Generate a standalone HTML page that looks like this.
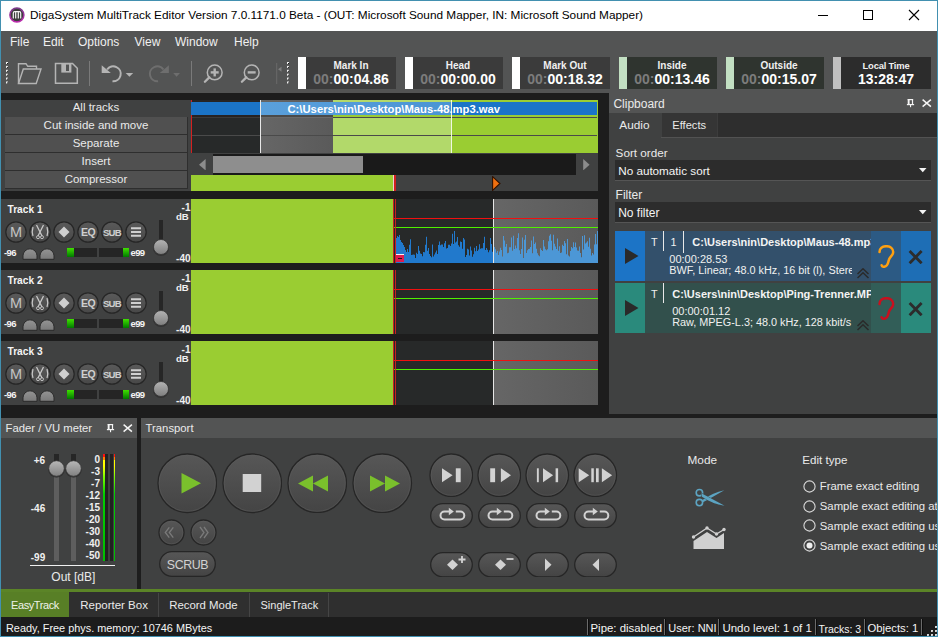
<!DOCTYPE html>
<html><head><meta charset="utf-8"><style>
html,body{margin:0;padding:0;width:938px;height:637px;overflow:hidden;background:#4290b0}
body>div,body>svg{position:absolute}
.t{white-space:nowrap;font-family:"Liberation Sans",sans-serif}
</style></head><body>
<div style="left:0px;top:0px;width:938px;height:637px;background:#4290b0;"></div>
<div style="left:1px;top:1px;width:936px;height:30px;background:#ffffff;"></div>
<div style="left:1px;top:31px;width:936px;height:62px;background:#535454;"></div>
<div style="left:1px;top:93px;width:936px;height:496px;background:#1d1d1d;"></div>
<svg style="left:9px;top:7px;" width="16" height="16" viewBox="0 0 16 16"><defs><linearGradient id="ring" x1="0" y1="0" x2="0" y2="1"><stop offset="0" stop-color="#7a3a8a"/><stop offset="1" stop-color="#c02ab0"/></linearGradient></defs><circle cx="7.9" cy="8.1" r="7.0" fill="#3c3c3c" stroke="url(#ring)" stroke-width="1.5"/><path d="M4.3 11.5 V6 Q4.3 4.6 5.7 4.6 H10.3 Q11.7 4.6 11.7 6 V11.5 M6.7 11.5 V4.8 M9.3 11.5 V4.8" fill="none" stroke="#f4f4f4" stroke-width="1.2"/></svg>
<div class="t" style="left:30px;top:10.01px;font-size:11.8px;line-height:11.8px;color:#000;font-weight:400;">DigaSystem MultiTrack Editor Version 7.0.1171.0 Beta - (OUT: Microsoft Sound Mapper, IN: Microsoft Sound Mapper)</div>
<svg style="left:818px;top:15px;" width="11" height="2" viewBox="0 0 11 2"><rect x="0" y="0" width="10" height="1" fill="#000"/></svg>
<svg style="left:863px;top:10px;" width="11" height="11" viewBox="0 0 11 11"><rect x="0.5" y="0.5" width="9" height="9" fill="none" stroke="#000" stroke-width="1"/></svg>
<svg style="left:908px;top:9px;" width="12" height="12" viewBox="0 0 12 12"><path d="M1 1 L11 11 M11 1 L1 11" stroke="#000" stroke-width="1.1"/></svg>
<div class="t" style="left:10px;top:36.44px;font-size:12px;line-height:12px;color:#f0f0f0;font-weight:400;">File</div>
<div class="t" style="left:43px;top:36.44px;font-size:12px;line-height:12px;color:#f0f0f0;font-weight:400;">Edit</div>
<div class="t" style="left:78px;top:36.44px;font-size:12px;line-height:12px;color:#f0f0f0;font-weight:400;">Options</div>
<div class="t" style="left:134.5px;top:36.44px;font-size:12px;line-height:12px;color:#f0f0f0;font-weight:400;">View</div>
<div class="t" style="left:175px;top:36.44px;font-size:12px;line-height:12px;color:#f0f0f0;font-weight:400;">Window</div>
<div class="t" style="left:234px;top:36.44px;font-size:12px;line-height:12px;color:#f0f0f0;font-weight:400;">Help</div>
<svg style="left:6px;top:62px;" width="3" height="23" viewBox="0 0 3 23"><rect x="0" y="0.0" width="2" height="2" fill="#f0f0f0"/><rect x="1" y="1.0" width="1" height="1" fill="#1a1a1a"/><rect x="0" y="3.9" width="2" height="2" fill="#f0f0f0"/><rect x="1" y="4.9" width="1" height="1" fill="#1a1a1a"/><rect x="0" y="7.8" width="2" height="2" fill="#f0f0f0"/><rect x="1" y="8.8" width="1" height="1" fill="#1a1a1a"/><rect x="0" y="11.7" width="2" height="2" fill="#f0f0f0"/><rect x="1" y="12.7" width="1" height="1" fill="#1a1a1a"/><rect x="0" y="15.6" width="2" height="2" fill="#f0f0f0"/><rect x="1" y="16.6" width="1" height="1" fill="#1a1a1a"/><rect x="0" y="19.5" width="2" height="2" fill="#f0f0f0"/><rect x="1" y="20.5" width="1" height="1" fill="#1a1a1a"/></svg>
<svg style="left:17px;top:62px;" width="26" height="24" viewBox="0 0 26 24"><path d="M1.5 21.5 V1.7 H9 L10.7 4.3 H19.5 V7" fill="none" stroke="#b4b4b4" stroke-width="1.4"/><path d="M1.5 21.5 L6.3 7 H24 L19.2 21.5 Z" fill="none" stroke="#b4b4b4" stroke-width="1.4"/></svg>
<svg style="left:54px;top:62px;" width="25" height="23" viewBox="0 0 25 23"><path d="M1.5 1.5 H18.5 L23.3 6.3 V21.3 H1.5 Z" fill="none" stroke="#b4b4b4" stroke-width="1.5"/><rect x="7.3" y="1.5" width="10.1" height="9.1" fill="#b4b4b4"/><rect x="12" y="2.6" width="3" height="6.4" fill="#535454"/></svg>
<div style="left:89px;top:61px;width:1px;height:25px;background:#7a7a7a;"></div>
<svg style="left:101px;top:63px;" width="34" height="21" viewBox="0 0 34 21"><path d="M6.1 6.5 A7.5 7.5 0 1 1 11.5 18.3" fill="none" stroke="#b4b4b4" stroke-width="2"/><path d="M0.7 2.2 V9.9 H9.8 Z" fill="#b4b4b4"/><path d="M24.7 9.9 H32.2 L28.45 13.7 Z" fill="#b4b4b4"/></svg>
<svg style="left:148px;top:63px;" width="34" height="21" viewBox="0 0 34 21"><path d="M15.5 6.5 A7.5 7.5 0 1 0 10.1 18.3" fill="none" stroke="#6e6e6e" stroke-width="2"/><path d="M20.9 2.2 V9.9 H11.8 Z" fill="#6e6e6e"/><path d="M25.2 9.9 H32 L28.6 13.7 Z" fill="#6e6e6e"/></svg>
<div style="left:191px;top:61px;width:1px;height:25px;background:#7a7a7a;"></div>
<svg style="left:203px;top:64px;" width="21" height="21" viewBox="0 0 21 21"><circle cx="11.7" cy="8.4" r="7.4" fill="none" stroke="#b4b4b4" stroke-width="1.5"/><path d="M6.3 13.4 L1.9 17.8" stroke="#b4b4b4" stroke-width="2.3" stroke-linecap="round"/><path d="M7.7 8.4 H15.7" stroke="#b4b4b4" stroke-width="2.4"/><path d="M11.7 4.4 V12.4" stroke="#b4b4b4" stroke-width="2.4"/></svg>
<svg style="left:239.8px;top:64px;" width="21" height="21" viewBox="0 0 21 21"><circle cx="11.7" cy="8.4" r="7.4" fill="none" stroke="#b4b4b4" stroke-width="1.5"/><path d="M6.3 13.4 L1.9 17.8" stroke="#b4b4b4" stroke-width="2.3" stroke-linecap="round"/><path d="M7.7 8.4 H15.7" stroke="#b4b4b4" stroke-width="2.4"/></svg>
<svg style="left:275px;top:62px;" width="8" height="24" viewBox="0 0 8 24"><rect x="1.2" y="1" width="1" height="21" fill="#6a6a6a"/><path d="M3 7.3 L6.5 4.8 V9.8 Z" fill="#7e7e7e"/></svg>
<svg style="left:287px;top:62px;" width="3" height="23" viewBox="0 0 3 23"><rect x="0" y="0.0" width="2" height="2" fill="#f0f0f0"/><rect x="1" y="1.0" width="1" height="1" fill="#1a1a1a"/><rect x="0" y="3.9" width="2" height="2" fill="#f0f0f0"/><rect x="1" y="4.9" width="1" height="1" fill="#1a1a1a"/><rect x="0" y="7.8" width="2" height="2" fill="#f0f0f0"/><rect x="1" y="8.8" width="1" height="1" fill="#1a1a1a"/><rect x="0" y="11.7" width="2" height="2" fill="#f0f0f0"/><rect x="1" y="12.7" width="1" height="1" fill="#1a1a1a"/><rect x="0" y="15.6" width="2" height="2" fill="#f0f0f0"/><rect x="1" y="16.6" width="1" height="1" fill="#1a1a1a"/><rect x="0" y="19.5" width="2" height="2" fill="#f0f0f0"/><rect x="1" y="20.5" width="1" height="1" fill="#1a1a1a"/></svg>
<div style="left:298px;top:57px;width:8px;height:32px;background:#ffffff;"></div>
<div style="left:306px;top:57px;width:90px;height:32px;background:#3b3b3b;"></div>
<div class="t" style="left:306.00px;width:90px;text-align:center;top:60.54px;font-size:10px;line-height:10px;color:#f0f0f0;font-weight:700;">Mark In</div>
<div class="t" style="left:306px;width:90px;text-align:center;top:72.45px;font-size:14px;line-height:14px;font-weight:700;color:#ffffff"><span style="color:#7c7c7c">00:</span>00:04.86</div>
<div style="left:405px;top:57px;width:8px;height:32px;background:#ffffff;"></div>
<div style="left:413px;top:57px;width:90px;height:32px;background:#3b3b3b;"></div>
<div class="t" style="left:413.00px;width:90px;text-align:center;top:60.54px;font-size:10px;line-height:10px;color:#f0f0f0;font-weight:700;">Head</div>
<div class="t" style="left:413px;width:90px;text-align:center;top:72.45px;font-size:14px;line-height:14px;font-weight:700;color:#ffffff"><span style="color:#7c7c7c">00:</span>00:00.00</div>
<div style="left:512px;top:57px;width:8px;height:32px;background:#ffffff;"></div>
<div style="left:520px;top:57px;width:90px;height:32px;background:#3b3b3b;"></div>
<div class="t" style="left:520.00px;width:90px;text-align:center;top:60.54px;font-size:10px;line-height:10px;color:#f0f0f0;font-weight:700;">Mark Out</div>
<div class="t" style="left:520px;width:90px;text-align:center;top:72.45px;font-size:14px;line-height:14px;font-weight:700;color:#ffffff"><span style="color:#7c7c7c">00:</span>00:18.32</div>
<div style="left:619px;top:57px;width:8px;height:32px;background:#c2dfc2;"></div>
<div style="left:627px;top:57px;width:90px;height:32px;background:#2f342f;"></div>
<div class="t" style="left:627.00px;width:90px;text-align:center;top:60.54px;font-size:10px;line-height:10px;color:#f0f0f0;font-weight:700;">Inside</div>
<div class="t" style="left:627px;width:90px;text-align:center;top:72.45px;font-size:14px;line-height:14px;font-weight:700;color:#ffffff"><span style="color:#7c7c7c">00:</span>00:13.46</div>
<div style="left:726px;top:57px;width:8px;height:32px;background:#c2dfc2;"></div>
<div style="left:734px;top:57px;width:90px;height:32px;background:#2f342f;"></div>
<div class="t" style="left:734.00px;width:90px;text-align:center;top:60.54px;font-size:10px;line-height:10px;color:#f0f0f0;font-weight:700;">Outside</div>
<div class="t" style="left:734px;width:90px;text-align:center;top:72.45px;font-size:14px;line-height:14px;font-weight:700;color:#ffffff"><span style="color:#7c7c7c">00:</span>00:15.07</div>
<div style="left:833px;top:57px;width:8px;height:32px;background:#c0c0c0;"></div>
<div style="left:841px;top:57px;width:90px;height:32px;background:#2c2c2c;"></div>
<div class="t" style="left:841.00px;width:90px;text-align:center;top:61.04px;font-size:9.4px;line-height:9.4px;color:#f0f0f0;font-weight:700;letter-spacing:-0.2px">Local Time</div>
<div class="t" style="left:841.00px;width:90px;text-align:center;top:72.15px;font-size:14px;line-height:14px;color:#ffffff;font-weight:700;">13:28:47</div>
<div style="left:1px;top:100px;width:190px;height:91px;background:#404141;"></div>
<div class="t" style="left:6.00px;width:180px;text-align:center;top:101.67px;font-size:11.5px;line-height:11.5px;color:#eaeaea;font-weight:400;">All tracks</div>
<div style="left:5px;top:117px;width:182px;height:17px;background:#505050;border-right:1px solid #2e2e2e;border-bottom:1px solid #2e2e2e;box-sizing:border-box;width:183px;height:18px"></div>
<div class="t" style="left:6.00px;width:180px;text-align:center;top:119.87px;font-size:11.5px;line-height:11.5px;color:#eaeaea;font-weight:400;">Cut inside and move</div>
<div style="left:5px;top:135px;width:182px;height:17px;background:#505050;border-right:1px solid #2e2e2e;border-bottom:1px solid #2e2e2e;box-sizing:border-box;width:183px;height:18px"></div>
<div class="t" style="left:6.00px;width:180px;text-align:center;top:137.87px;font-size:11.5px;line-height:11.5px;color:#eaeaea;font-weight:400;">Separate</div>
<div style="left:5px;top:153px;width:182px;height:17px;background:#505050;border-right:1px solid #2e2e2e;border-bottom:1px solid #2e2e2e;box-sizing:border-box;width:183px;height:18px"></div>
<div class="t" style="left:6.00px;width:180px;text-align:center;top:155.87px;font-size:11.5px;line-height:11.5px;color:#eaeaea;font-weight:400;">Insert</div>
<div style="left:5px;top:171px;width:182px;height:17px;background:#505050;border-right:1px solid #2e2e2e;border-bottom:1px solid #2e2e2e;box-sizing:border-box;width:183px;height:18px"></div>
<div class="t" style="left:6.00px;width:180px;text-align:center;top:173.87px;font-size:11.5px;line-height:11.5px;color:#eaeaea;font-weight:400;">Compressor</div>
<div style="left:191px;top:100px;width:407px;height:53px;background:#272929;"></div>
<div style="left:261px;top:100px;width:72px;height:53px;background:linear-gradient(90deg,#666 0%,#5a5a5a 100%);"></div>
<div style="left:333px;top:100px;width:118px;height:53px;background:#b2d96a;"></div>
<div style="left:451px;top:100px;width:147px;height:53px;background:#9acd32;"></div>
<div style="left:191px;top:100px;width:70px;height:2px;background:#262424;"></div>
<div style="left:191px;top:102px;width:406px;height:13px;background:#1b74c7;"></div>
<div style="left:261px;top:102px;width:190px;height:13px;background:linear-gradient(90deg,#5aa0dc,#4a94d4);"></div>
<div style="left:191px;top:115px;width:70px;height:2px;background:#262222;"></div>
<div style="left:261px;top:115px;width:72px;height:2px;background:#4a4a4a;"></div>
<div style="left:191px;top:117px;width:70px;height:1px;background:#3a3a3a;"></div>
<div style="left:261px;top:117px;width:72px;height:1px;background:#6a6a6a;"></div>
<div style="left:191px;top:135px;width:407px;height:1px;background:#4a4a4a;"></div>
<div style="left:333px;top:115px;width:265px;height:2px;background:#9acd32;"></div>
<div style="left:333px;top:117px;width:265px;height:1px;background:#4a4a4a;"></div>
<div style="left:597px;top:100px;width:1px;height:53px;background:#9acd32;"></div>
<div style="left:191px;top:100px;width:1px;height:53px;background:#d42020;"></div>
<div style="left:191px;top:102px;width:1px;height:13px;background:#1b74c7;"></div>
<div style="left:260px;top:100px;width:1px;height:53px;background:#e8e8e8;"></div>
<div style="left:451px;top:100px;width:1px;height:53px;background:#f0f8e0;"></div>
<div class="t" style="left:287.5px;top:104.08px;font-size:11.25px;line-height:11.25px;color:#ffffff;font-weight:700;">C:\Users\nin\Desktop\Maus-48.mp3.wav</div>
<div style="left:188px;top:153px;width:410px;height:38px;background:#404141;"></div>
<div style="left:213px;top:154px;width:363px;height:21px;background:#1a1a1a;"></div>
<svg style="left:198.5px;top:158.8px;" width="7" height="11.5" viewBox="0 0 7 11.5"><path d="M6.6 0 V11.4 L0 5.7 Z" fill="#8c8c8c"/></svg>
<div style="left:213px;top:156px;width:150px;height:17px;background:#8e8e8e;"></div>
<svg style="left:582.8px;top:158.8px;" width="7" height="11.5" viewBox="0 0 7 11.5"><path d="M0.2 0 V11.4 L6.6 5.7 Z" fill="#8c8c8c"/></svg>
<div style="left:191px;top:175px;width:202px;height:16px;background:#9acd32;"></div>
<div style="left:393px;top:175px;width:1px;height:16px;background:#f0d0d0;"></div>
<div style="left:394px;top:175px;width:2px;height:16px;background:#d02020;"></div>
<svg style="left:492px;top:176px;" width="9" height="15" viewBox="0 0 9 15"><path d="M0.6 0.6 L8 7.5 L0.6 14.4 Z" fill="#f07010" stroke="#301200" stroke-width="1.1"/></svg>
<div style="left:1px;top:199px;width:190px;height:64px;background:#404141;"></div>
<div class="t" style="left:7.5px;top:204.77px;font-size:10.2px;line-height:10.2px;color:#f4f4f4;font-weight:700;">Track 1</div>
<svg style="left:5.300000000000001px;top:221px;" width="22" height="22" viewBox="0 0 22 22"><defs><linearGradient id="bg00" x1="0" y1="0" x2="0" y2="1"><stop offset="0" stop-color="#5a5a5a"/><stop offset="1" stop-color="#484848"/></linearGradient></defs><circle cx="11" cy="11" r="10.2" fill="url(#bg00)" stroke="#262626" stroke-width="1.2"/><text x="11" y="16.2" font-family="Liberation Sans" font-size="14.5" fill="#c4c4c4" text-anchor="middle">M</text></svg>
<svg style="left:29.299999999999997px;top:221px;" width="22" height="22" viewBox="0 0 22 22"><defs><linearGradient id="bg01" x1="0" y1="0" x2="0" y2="1"><stop offset="0" stop-color="#5a5a5a"/><stop offset="1" stop-color="#484848"/></linearGradient></defs><circle cx="11" cy="11" r="10.2" fill="url(#bg01)" stroke="#262626" stroke-width="1.2"/><path d="M7.5 4 L13 15 M14.5 4 L9 15" stroke="#c8c8c8" stroke-width="1.3"/><circle cx="9" cy="16.2" r="1.5" fill="none" stroke="#c8c8c8" stroke-width="0.9"/><circle cx="13" cy="16.2" r="1.5" fill="none" stroke="#c8c8c8" stroke-width="0.9"/><path d="M4 6 Q2.5 11 4 15 M18 6 Q19.5 11 18 15" fill="none" stroke="#c8c8c8" stroke-width="1.2"/></svg>
<svg style="left:53.3px;top:221px;" width="22" height="22" viewBox="0 0 22 22"><defs><linearGradient id="bg02" x1="0" y1="0" x2="0" y2="1"><stop offset="0" stop-color="#5a5a5a"/><stop offset="1" stop-color="#484848"/></linearGradient></defs><circle cx="11" cy="11" r="10.2" fill="url(#bg02)" stroke="#262626" stroke-width="1.2"/><path d="M11 5.5 L16.5 11 L11 16.5 L5.5 11 Z" fill="#d0d0d0"/></svg>
<svg style="left:77.3px;top:221px;" width="22" height="22" viewBox="0 0 22 22"><defs><linearGradient id="bg03" x1="0" y1="0" x2="0" y2="1"><stop offset="0" stop-color="#5a5a5a"/><stop offset="1" stop-color="#484848"/></linearGradient></defs><circle cx="11" cy="11" r="10.2" fill="url(#bg03)" stroke="#262626" stroke-width="1.2"/><text x="11.2" y="15.2" font-family="Liberation Sans" font-size="10.5" font-weight="700" fill="#cfcfcf" text-anchor="middle" letter-spacing="-0.4">EQ</text></svg>
<svg style="left:101.3px;top:221px;" width="22" height="22" viewBox="0 0 22 22"><defs><linearGradient id="bg04" x1="0" y1="0" x2="0" y2="1"><stop offset="0" stop-color="#5a5a5a"/><stop offset="1" stop-color="#484848"/></linearGradient></defs><circle cx="11" cy="11" r="10.2" fill="url(#bg04)" stroke="#262626" stroke-width="1.2"/><text x="11" y="15" font-family="Liberation Sans" font-size="9.6" font-weight="700" fill="#cfcfcf" text-anchor="middle" letter-spacing="-0.7">SUB</text></svg>
<svg style="left:125.30000000000001px;top:221px;" width="22" height="22" viewBox="0 0 22 22"><defs><linearGradient id="bg05" x1="0" y1="0" x2="0" y2="1"><stop offset="0" stop-color="#5a5a5a"/><stop offset="1" stop-color="#484848"/></linearGradient></defs><circle cx="11" cy="11" r="10.2" fill="url(#bg05)" stroke="#262626" stroke-width="1.2"/><path d="M6 7.3 H16 M6 11 H16 M6 14.7 H16" stroke="#d0d0d0" stroke-width="1.9"/></svg>
<div class="t" style="left:4px;top:248px;font-size:9.5px;line-height:10px;color:#f4f4f4;font-weight:700;letter-spacing:-0.6px">-96</div>
<svg style="left:22px;top:247.5px;" width="16" height="12" viewBox="0 0 16 12"><defs><linearGradient id="hc" x1="0" y1="0" x2="0" y2="1"><stop offset="0" stop-color="#949494"/><stop offset="1" stop-color="#7a7a7a"/></linearGradient></defs><path d="M1 11.3 V7.8 A7 7 0 0 1 15 7.8 V11.3 Z" fill="url(#hc)" stroke="#2a2a2a" stroke-width="1"/></svg>
<svg style="left:39.2px;top:247.5px;" width="16" height="12" viewBox="0 0 16 12"><defs><linearGradient id="hc" x1="0" y1="0" x2="0" y2="1"><stop offset="0" stop-color="#949494"/><stop offset="1" stop-color="#7a7a7a"/></linearGradient></defs><path d="M1 11.3 V7.8 A7 7 0 0 1 15 7.8 V11.3 Z" fill="url(#hc)" stroke="#2a2a2a" stroke-width="1"/></svg>
<div style="left:67px;top:247.6px;width:30px;height:9.6px;background:#252525;"></div>
<div style="left:67px;top:247.6px;width:6.5px;height:9.6px;background:linear-gradient(#40e000,#007800);"></div>
<div style="left:99px;top:247.6px;width:30px;height:9.6px;background:#252525;"></div>
<div style="left:122.5px;top:247.6px;width:6.5px;height:9.6px;background:linear-gradient(#40e000,#007800);"></div>
<div class="t" style="left:130.5px;top:248px;font-size:9.5px;line-height:10px;color:#f4f4f4;font-weight:700;letter-spacing:-0.6px">e99</div>
<div style="left:159px;top:220px;width:4px;height:28px;background:#262626;"></div>
<svg style="left:152px;top:237.5px;" width="19" height="20" viewBox="0 0 19 20"><defs><linearGradient id="kn" x1="0" y1="0" x2="0" y2="1"><stop offset="0" stop-color="#b4b4b4"/><stop offset="1" stop-color="#7e7e7e"/></linearGradient></defs><circle cx="9" cy="10" r="8" fill="#2c2c2c" fill-opacity="0.7"/><circle cx="9" cy="9" r="7.5" fill="url(#kn)" stroke="#333" stroke-width="0.8"/></svg>
<div class="t" style="left:150.50px;width:40px;text-align:right;top:203.13px;font-size:10px;line-height:10px;color:#f0f0f0;font-weight:700;">-1</div>
<div class="t" style="left:148.80px;width:40px;text-align:right;top:212.07px;font-size:9.6px;line-height:9.6px;color:#f0f0f0;font-weight:700;">dB</div>
<div class="t" style="left:150.50px;width:40px;text-align:right;top:253.53px;font-size:10px;line-height:10px;color:#f0f0f0;font-weight:700;">-40</div>
<div style="left:191px;top:199px;width:407px;height:64px;background:#272929;"></div>
<div style="left:191px;top:199px;width:202px;height:64px;background:#9acd32;"></div>
<div style="left:393px;top:199px;width:1px;height:64px;background:#c82020;"></div>
<div style="left:493px;top:199px;width:105px;height:64px;background:linear-gradient(90deg,#666 0%,#5a5a5a 100%);"></div>
<svg style="left:0px;top:199px" width="938" height="64"><defs><clipPath id="c1"><rect x="396" y="0" width="97" height="64"/></clipPath><clipPath id="c2"><rect x="494" y="0" width="104" height="64"/></clipPath></defs><path d="M396 64 L396 39.0 L397 39.0 L397 37.0 L398 37.0 L398 38.0 L399 38.0 L399 36.0 L400 36.0 L400 41.0 L401 41.0 L401 43.0 L402 43.0 L402 44.0 L403 44.0 L403 46.0 L404 46.0 L404 48.0 L405 48.0 L405 51.0 L406 51.0 L406 53.0 L407 53.0 L407 50.0 L408 50.0 L408 53.0 L409 53.0 L409 45.7 L410 45.7 L410 40.3 L411 40.3 L411 55.9 L412 55.9 L412 55.8 L413 55.8 L413 55.4 L414 55.4 L414 55.8 L415 55.8 L415 59.0 L416 59.0 L416 53.7 L417 53.7 L417 55.0 L418 55.0 L418 46.9 L419 46.9 L419 51.8 L420 51.8 L420 54.5 L421 54.5 L421 55.0 L422 55.0 L422 57.3 L423 57.3 L423 53.0 L424 53.0 L424 53.2 L425 53.2 L425 45.8 L426 45.8 L426 37.8 L427 37.8 L427 51.7 L428 51.7 L428 49.1 L429 49.1 L429 55.1 L430 55.1 L430 57.1 L431 57.1 L431 58.2 L432 58.2 L432 45.4 L433 45.4 L433 57.4 L434 57.4 L434 55.5 L435 55.5 L435 53.4 L436 53.4 L436 51.4 L437 51.4 L437 54.9 L438 54.9 L438 46.0 L439 46.0 L439 42.6 L440 42.6 L440 46.3 L441 46.3 L441 45.4 L442 45.4 L442 45.4 L443 45.4 L443 47.9 L444 47.9 L444 44.3 L445 44.3 L445 42.1 L446 42.1 L446 49.4 L447 49.4 L447 48.9 L448 48.9 L448 45.8 L449 45.8 L449 45.7 L450 45.7 L450 47.0 L451 47.0 L451 44.5 L452 44.5 L452 34.7 L453 34.7 L453 45.1 L454 45.1 L454 32.0 L455 32.0 L455 43.4 L456 43.4 L456 42.5 L457 42.5 L457 37.9 L458 37.9 L458 46.2 L459 46.2 L459 47.8 L460 47.8 L460 42.5 L461 42.5 L461 43.0 L462 43.0 L462 49.7 L463 49.7 L463 38.9 L464 38.9 L464 40.4 L465 40.4 L465 58.1 L466 58.1 L466 55.9 L467 55.9 L467 49.7 L468 49.7 L468 50.5 L469 50.5 L469 56.6 L470 56.6 L470 47.6 L471 47.6 L471 51.4 L472 51.4 L472 57.8 L473 57.8 L473 55.2 L474 55.2 L474 48.8 L475 48.8 L475 52.3 L476 52.3 L476 47.0 L477 47.0 L477 51.9 L478 51.9 L478 50.4 L479 50.4 L479 45.2 L480 45.2 L480 49.7 L481 49.7 L481 49.3 L482 49.3 L482 49.3 L483 49.3 L483 44.1 L484 44.1 L484 37.7 L485 37.7 L485 51.0 L486 51.0 L486 49.0 L487 49.0 L487 50.8 L488 50.8 L488 53.3 L489 53.3 L489 51.2 L490 51.2 L490 39.1 L491 39.1 L491 45.0 L492 45.0 L492 52.8 L493 52.8 L493 48.5 L494 48.5 L494 48.1 L495 48.1 L495 50.2 L496 50.2 L496 53.8 L497 53.8 L497 52.1 L498 52.1 L498 56.1 L499 56.1 L499 52.4 L500 52.4 L500 48.7 L501 48.7 L501 51.1 L502 51.1 L502 57.5 L503 57.5 L503 36.9 L504 36.9 L504 41.6 L505 41.6 L505 47.8 L506 47.8 L506 45.0 L507 45.0 L507 54.2 L508 54.2 L508 53.7 L509 53.7 L509 48.2 L510 48.2 L510 48.2 L511 48.2 L511 38.5 L512 38.5 L512 51.8 L513 51.8 L513 36.7 L514 36.7 L514 50.1 L515 50.1 L515 46.5 L516 46.5 L516 49.2 L517 49.2 L517 39.0 L518 39.0 L518 34.3 L519 34.3 L519 51.2 L520 51.2 L520 54.9 L521 54.9 L521 49.9 L522 49.9 L522 38.6 L523 38.6 L523 59.0 L524 59.0 L524 40.8 L525 40.8 L525 36.1 L526 36.1 L526 53.9 L527 53.9 L527 51.2 L528 51.2 L528 49.9 L529 49.9 L529 49.8 L530 49.8 L530 48.1 L531 48.1 L531 41.5 L532 41.5 L532 54.2 L533 54.2 L533 37.4 L534 37.4 L534 45.1 L535 45.1 L535 43.4 L536 43.4 L536 49.8 L537 49.8 L537 54.2 L538 54.2 L538 56.2 L539 56.2 L539 57.3 L540 57.3 L540 49.3 L541 49.3 L541 50.9 L542 50.9 L542 52.1 L543 52.1 L543 41.1 L544 41.1 L544 47.5 L545 47.5 L545 50.3 L546 50.3 L546 51.3 L547 51.3 L547 50.3 L548 50.3 L548 42.2 L549 42.2 L549 36.7 L550 36.7 L550 35.2 L551 35.2 L551 41.7 L552 41.7 L552 51.2 L553 51.2 L553 35.7 L554 35.7 L554 44.8 L555 44.8 L555 47.6 L556 47.6 L556 50.0 L557 50.0 L557 39.4 L558 39.4 L558 51.8 L559 51.8 L559 47.3 L560 47.3 L560 54.1 L561 54.1 L561 53.6 L562 53.6 L562 45.8 L563 45.8 L563 46.9 L564 46.9 L564 41.9 L565 41.9 L565 44.2 L566 44.2 L566 55.2 L567 55.2 L567 40.1 L568 40.1 L568 56.6 L569 56.6 L569 57.4 L570 57.4 L570 52.0 L571 52.0 L571 48.0 L572 48.0 L572 49.2 L573 49.2 L573 43.2 L574 43.2 L574 48.0 L575 48.0 L575 43.6 L576 43.6 L576 48.6 L577 48.6 L577 51.5 L578 51.5 L578 51.7 L579 51.7 L579 47.6 L580 47.6 L580 54.1 L581 54.1 L581 58.2 L582 58.2 L582 36.9 L583 36.9 L583 50.6 L584 50.6 L584 36.2 L585 36.2 L585 44.6 L586 44.6 L586 43.6 L587 43.6 L587 42.2 L588 42.2 L588 47.8 L589 47.8 L589 38.8 L590 38.8 L590 49.7 L591 49.7 L591 56.6 L592 56.6 L592 54.0 L593 54.0 L593 55.4 L594 55.4 L594 45.4 L595 45.4 L595 34.9 L596 34.9 L596 45.3 L597 45.3 L597 32.0 L598 32.0 L598 64 Z" fill="#2179cc" clip-path="url(#c1)"/><path d="M396 64 L396 39.0 L397 39.0 L397 37.0 L398 37.0 L398 38.0 L399 38.0 L399 36.0 L400 36.0 L400 41.0 L401 41.0 L401 43.0 L402 43.0 L402 44.0 L403 44.0 L403 46.0 L404 46.0 L404 48.0 L405 48.0 L405 51.0 L406 51.0 L406 53.0 L407 53.0 L407 50.0 L408 50.0 L408 53.0 L409 53.0 L409 45.7 L410 45.7 L410 40.3 L411 40.3 L411 55.9 L412 55.9 L412 55.8 L413 55.8 L413 55.4 L414 55.4 L414 55.8 L415 55.8 L415 59.0 L416 59.0 L416 53.7 L417 53.7 L417 55.0 L418 55.0 L418 46.9 L419 46.9 L419 51.8 L420 51.8 L420 54.5 L421 54.5 L421 55.0 L422 55.0 L422 57.3 L423 57.3 L423 53.0 L424 53.0 L424 53.2 L425 53.2 L425 45.8 L426 45.8 L426 37.8 L427 37.8 L427 51.7 L428 51.7 L428 49.1 L429 49.1 L429 55.1 L430 55.1 L430 57.1 L431 57.1 L431 58.2 L432 58.2 L432 45.4 L433 45.4 L433 57.4 L434 57.4 L434 55.5 L435 55.5 L435 53.4 L436 53.4 L436 51.4 L437 51.4 L437 54.9 L438 54.9 L438 46.0 L439 46.0 L439 42.6 L440 42.6 L440 46.3 L441 46.3 L441 45.4 L442 45.4 L442 45.4 L443 45.4 L443 47.9 L444 47.9 L444 44.3 L445 44.3 L445 42.1 L446 42.1 L446 49.4 L447 49.4 L447 48.9 L448 48.9 L448 45.8 L449 45.8 L449 45.7 L450 45.7 L450 47.0 L451 47.0 L451 44.5 L452 44.5 L452 34.7 L453 34.7 L453 45.1 L454 45.1 L454 32.0 L455 32.0 L455 43.4 L456 43.4 L456 42.5 L457 42.5 L457 37.9 L458 37.9 L458 46.2 L459 46.2 L459 47.8 L460 47.8 L460 42.5 L461 42.5 L461 43.0 L462 43.0 L462 49.7 L463 49.7 L463 38.9 L464 38.9 L464 40.4 L465 40.4 L465 58.1 L466 58.1 L466 55.9 L467 55.9 L467 49.7 L468 49.7 L468 50.5 L469 50.5 L469 56.6 L470 56.6 L470 47.6 L471 47.6 L471 51.4 L472 51.4 L472 57.8 L473 57.8 L473 55.2 L474 55.2 L474 48.8 L475 48.8 L475 52.3 L476 52.3 L476 47.0 L477 47.0 L477 51.9 L478 51.9 L478 50.4 L479 50.4 L479 45.2 L480 45.2 L480 49.7 L481 49.7 L481 49.3 L482 49.3 L482 49.3 L483 49.3 L483 44.1 L484 44.1 L484 37.7 L485 37.7 L485 51.0 L486 51.0 L486 49.0 L487 49.0 L487 50.8 L488 50.8 L488 53.3 L489 53.3 L489 51.2 L490 51.2 L490 39.1 L491 39.1 L491 45.0 L492 45.0 L492 52.8 L493 52.8 L493 48.5 L494 48.5 L494 48.1 L495 48.1 L495 50.2 L496 50.2 L496 53.8 L497 53.8 L497 52.1 L498 52.1 L498 56.1 L499 56.1 L499 52.4 L500 52.4 L500 48.7 L501 48.7 L501 51.1 L502 51.1 L502 57.5 L503 57.5 L503 36.9 L504 36.9 L504 41.6 L505 41.6 L505 47.8 L506 47.8 L506 45.0 L507 45.0 L507 54.2 L508 54.2 L508 53.7 L509 53.7 L509 48.2 L510 48.2 L510 48.2 L511 48.2 L511 38.5 L512 38.5 L512 51.8 L513 51.8 L513 36.7 L514 36.7 L514 50.1 L515 50.1 L515 46.5 L516 46.5 L516 49.2 L517 49.2 L517 39.0 L518 39.0 L518 34.3 L519 34.3 L519 51.2 L520 51.2 L520 54.9 L521 54.9 L521 49.9 L522 49.9 L522 38.6 L523 38.6 L523 59.0 L524 59.0 L524 40.8 L525 40.8 L525 36.1 L526 36.1 L526 53.9 L527 53.9 L527 51.2 L528 51.2 L528 49.9 L529 49.9 L529 49.8 L530 49.8 L530 48.1 L531 48.1 L531 41.5 L532 41.5 L532 54.2 L533 54.2 L533 37.4 L534 37.4 L534 45.1 L535 45.1 L535 43.4 L536 43.4 L536 49.8 L537 49.8 L537 54.2 L538 54.2 L538 56.2 L539 56.2 L539 57.3 L540 57.3 L540 49.3 L541 49.3 L541 50.9 L542 50.9 L542 52.1 L543 52.1 L543 41.1 L544 41.1 L544 47.5 L545 47.5 L545 50.3 L546 50.3 L546 51.3 L547 51.3 L547 50.3 L548 50.3 L548 42.2 L549 42.2 L549 36.7 L550 36.7 L550 35.2 L551 35.2 L551 41.7 L552 41.7 L552 51.2 L553 51.2 L553 35.7 L554 35.7 L554 44.8 L555 44.8 L555 47.6 L556 47.6 L556 50.0 L557 50.0 L557 39.4 L558 39.4 L558 51.8 L559 51.8 L559 47.3 L560 47.3 L560 54.1 L561 54.1 L561 53.6 L562 53.6 L562 45.8 L563 45.8 L563 46.9 L564 46.9 L564 41.9 L565 41.9 L565 44.2 L566 44.2 L566 55.2 L567 55.2 L567 40.1 L568 40.1 L568 56.6 L569 56.6 L569 57.4 L570 57.4 L570 52.0 L571 52.0 L571 48.0 L572 48.0 L572 49.2 L573 49.2 L573 43.2 L574 43.2 L574 48.0 L575 48.0 L575 43.6 L576 43.6 L576 48.6 L577 48.6 L577 51.5 L578 51.5 L578 51.7 L579 51.7 L579 47.6 L580 47.6 L580 54.1 L581 54.1 L581 58.2 L582 58.2 L582 36.9 L583 36.9 L583 50.6 L584 50.6 L584 36.2 L585 36.2 L585 44.6 L586 44.6 L586 43.6 L587 43.6 L587 42.2 L588 42.2 L588 47.8 L589 47.8 L589 38.8 L590 38.8 L590 49.7 L591 49.7 L591 56.6 L592 56.6 L592 54.0 L593 54.0 L593 55.4 L594 55.4 L594 45.4 L595 45.4 L595 34.9 L596 34.9 L596 45.3 L597 45.3 L597 32.0 L598 32.0 L598 64 Z" fill="#4c97d6" clip-path="url(#c2)"/></svg>
<div style="left:396px;top:254px;width:8px;height:8px;background:#dc1c50;border-top:1.5px solid #f4f4f4;box-sizing:border-box"></div>
<div style="left:398px;top:257.5px;width:4px;height:1.5px;background:#1a1a1a;"></div>
<div style="left:493px;top:199px;width:1px;height:64px;background:#e6e6e6;"></div>
<div style="left:394px;top:218px;width:204px;height:1px;background:#f01010;"></div>
<div style="left:394px;top:227px;width:204px;height:1px;background:#50f000;"></div>
<div style="left:395px;top:199px;width:1px;height:64px;background:#c82020;"></div>
<div style="left:1px;top:270px;width:190px;height:64px;background:#404141;"></div>
<div class="t" style="left:7.5px;top:275.77px;font-size:10.2px;line-height:10.2px;color:#f4f4f4;font-weight:700;">Track 2</div>
<svg style="left:5.300000000000001px;top:292px;" width="22" height="22" viewBox="0 0 22 22"><defs><linearGradient id="bg10" x1="0" y1="0" x2="0" y2="1"><stop offset="0" stop-color="#5a5a5a"/><stop offset="1" stop-color="#484848"/></linearGradient></defs><circle cx="11" cy="11" r="10.2" fill="url(#bg10)" stroke="#262626" stroke-width="1.2"/><text x="11" y="16.2" font-family="Liberation Sans" font-size="14.5" fill="#c4c4c4" text-anchor="middle">M</text></svg>
<svg style="left:29.299999999999997px;top:292px;" width="22" height="22" viewBox="0 0 22 22"><defs><linearGradient id="bg11" x1="0" y1="0" x2="0" y2="1"><stop offset="0" stop-color="#5a5a5a"/><stop offset="1" stop-color="#484848"/></linearGradient></defs><circle cx="11" cy="11" r="10.2" fill="url(#bg11)" stroke="#262626" stroke-width="1.2"/><path d="M7.5 4 L13 15 M14.5 4 L9 15" stroke="#c8c8c8" stroke-width="1.3"/><circle cx="9" cy="16.2" r="1.5" fill="none" stroke="#c8c8c8" stroke-width="0.9"/><circle cx="13" cy="16.2" r="1.5" fill="none" stroke="#c8c8c8" stroke-width="0.9"/><path d="M4 6 Q2.5 11 4 15 M18 6 Q19.5 11 18 15" fill="none" stroke="#c8c8c8" stroke-width="1.2"/></svg>
<svg style="left:53.3px;top:292px;" width="22" height="22" viewBox="0 0 22 22"><defs><linearGradient id="bg12" x1="0" y1="0" x2="0" y2="1"><stop offset="0" stop-color="#5a5a5a"/><stop offset="1" stop-color="#484848"/></linearGradient></defs><circle cx="11" cy="11" r="10.2" fill="url(#bg12)" stroke="#262626" stroke-width="1.2"/><path d="M11 5.5 L16.5 11 L11 16.5 L5.5 11 Z" fill="#d0d0d0"/></svg>
<svg style="left:77.3px;top:292px;" width="22" height="22" viewBox="0 0 22 22"><defs><linearGradient id="bg13" x1="0" y1="0" x2="0" y2="1"><stop offset="0" stop-color="#5a5a5a"/><stop offset="1" stop-color="#484848"/></linearGradient></defs><circle cx="11" cy="11" r="10.2" fill="url(#bg13)" stroke="#262626" stroke-width="1.2"/><text x="11.2" y="15.2" font-family="Liberation Sans" font-size="10.5" font-weight="700" fill="#cfcfcf" text-anchor="middle" letter-spacing="-0.4">EQ</text></svg>
<svg style="left:101.3px;top:292px;" width="22" height="22" viewBox="0 0 22 22"><defs><linearGradient id="bg14" x1="0" y1="0" x2="0" y2="1"><stop offset="0" stop-color="#5a5a5a"/><stop offset="1" stop-color="#484848"/></linearGradient></defs><circle cx="11" cy="11" r="10.2" fill="url(#bg14)" stroke="#262626" stroke-width="1.2"/><text x="11" y="15" font-family="Liberation Sans" font-size="9.6" font-weight="700" fill="#cfcfcf" text-anchor="middle" letter-spacing="-0.7">SUB</text></svg>
<svg style="left:125.30000000000001px;top:292px;" width="22" height="22" viewBox="0 0 22 22"><defs><linearGradient id="bg15" x1="0" y1="0" x2="0" y2="1"><stop offset="0" stop-color="#5a5a5a"/><stop offset="1" stop-color="#484848"/></linearGradient></defs><circle cx="11" cy="11" r="10.2" fill="url(#bg15)" stroke="#262626" stroke-width="1.2"/><path d="M6 7.3 H16 M6 11 H16 M6 14.7 H16" stroke="#d0d0d0" stroke-width="1.9"/></svg>
<div class="t" style="left:4px;top:319px;font-size:9.5px;line-height:10px;color:#f4f4f4;font-weight:700;letter-spacing:-0.6px">-96</div>
<svg style="left:22px;top:318.5px;" width="16" height="12" viewBox="0 0 16 12"><defs><linearGradient id="hc" x1="0" y1="0" x2="0" y2="1"><stop offset="0" stop-color="#949494"/><stop offset="1" stop-color="#7a7a7a"/></linearGradient></defs><path d="M1 11.3 V7.8 A7 7 0 0 1 15 7.8 V11.3 Z" fill="url(#hc)" stroke="#2a2a2a" stroke-width="1"/></svg>
<svg style="left:39.2px;top:318.5px;" width="16" height="12" viewBox="0 0 16 12"><defs><linearGradient id="hc" x1="0" y1="0" x2="0" y2="1"><stop offset="0" stop-color="#949494"/><stop offset="1" stop-color="#7a7a7a"/></linearGradient></defs><path d="M1 11.3 V7.8 A7 7 0 0 1 15 7.8 V11.3 Z" fill="url(#hc)" stroke="#2a2a2a" stroke-width="1"/></svg>
<div style="left:67px;top:318.6px;width:30px;height:9.6px;background:#252525;"></div>
<div style="left:67px;top:318.6px;width:6.5px;height:9.6px;background:linear-gradient(#40e000,#007800);"></div>
<div style="left:99px;top:318.6px;width:30px;height:9.6px;background:#252525;"></div>
<div style="left:122.5px;top:318.6px;width:6.5px;height:9.6px;background:linear-gradient(#40e000,#007800);"></div>
<div class="t" style="left:130.5px;top:319px;font-size:9.5px;line-height:10px;color:#f4f4f4;font-weight:700;letter-spacing:-0.6px">e99</div>
<div style="left:159px;top:291px;width:4px;height:28px;background:#262626;"></div>
<svg style="left:152px;top:308.5px;" width="19" height="20" viewBox="0 0 19 20"><defs><linearGradient id="kn" x1="0" y1="0" x2="0" y2="1"><stop offset="0" stop-color="#b4b4b4"/><stop offset="1" stop-color="#7e7e7e"/></linearGradient></defs><circle cx="9" cy="10" r="8" fill="#2c2c2c" fill-opacity="0.7"/><circle cx="9" cy="9" r="7.5" fill="url(#kn)" stroke="#333" stroke-width="0.8"/></svg>
<div class="t" style="left:150.50px;width:40px;text-align:right;top:274.14px;font-size:10px;line-height:10px;color:#f0f0f0;font-weight:700;">-1</div>
<div class="t" style="left:148.80px;width:40px;text-align:right;top:283.07px;font-size:9.6px;line-height:9.6px;color:#f0f0f0;font-weight:700;">dB</div>
<div class="t" style="left:150.50px;width:40px;text-align:right;top:324.54px;font-size:10px;line-height:10px;color:#f0f0f0;font-weight:700;">-40</div>
<div style="left:191px;top:270px;width:407px;height:64px;background:#272929;"></div>
<div style="left:191px;top:270px;width:202px;height:64px;background:#9acd32;"></div>
<div style="left:393px;top:270px;width:1px;height:64px;background:#c82020;"></div>
<div style="left:493px;top:270px;width:105px;height:64px;background:linear-gradient(90deg,#666 0%,#5a5a5a 100%);"></div>
<div style="left:493px;top:270px;width:1px;height:64px;background:#e6e6e6;"></div>
<div style="left:394px;top:289px;width:204px;height:1px;background:#f01010;"></div>
<div style="left:394px;top:298px;width:204px;height:1px;background:#50f000;"></div>
<div style="left:395px;top:270px;width:1px;height:64px;background:#c82020;"></div>
<div style="left:1px;top:341px;width:190px;height:64px;background:#404141;"></div>
<div class="t" style="left:7.5px;top:346.77px;font-size:10.2px;line-height:10.2px;color:#f4f4f4;font-weight:700;">Track 3</div>
<svg style="left:5.300000000000001px;top:363px;" width="22" height="22" viewBox="0 0 22 22"><defs><linearGradient id="bg20" x1="0" y1="0" x2="0" y2="1"><stop offset="0" stop-color="#5a5a5a"/><stop offset="1" stop-color="#484848"/></linearGradient></defs><circle cx="11" cy="11" r="10.2" fill="url(#bg20)" stroke="#262626" stroke-width="1.2"/><text x="11" y="16.2" font-family="Liberation Sans" font-size="14.5" fill="#c4c4c4" text-anchor="middle">M</text></svg>
<svg style="left:29.299999999999997px;top:363px;" width="22" height="22" viewBox="0 0 22 22"><defs><linearGradient id="bg21" x1="0" y1="0" x2="0" y2="1"><stop offset="0" stop-color="#5a5a5a"/><stop offset="1" stop-color="#484848"/></linearGradient></defs><circle cx="11" cy="11" r="10.2" fill="url(#bg21)" stroke="#262626" stroke-width="1.2"/><path d="M7.5 4 L13 15 M14.5 4 L9 15" stroke="#c8c8c8" stroke-width="1.3"/><circle cx="9" cy="16.2" r="1.5" fill="none" stroke="#c8c8c8" stroke-width="0.9"/><circle cx="13" cy="16.2" r="1.5" fill="none" stroke="#c8c8c8" stroke-width="0.9"/><path d="M4 6 Q2.5 11 4 15 M18 6 Q19.5 11 18 15" fill="none" stroke="#c8c8c8" stroke-width="1.2"/></svg>
<svg style="left:53.3px;top:363px;" width="22" height="22" viewBox="0 0 22 22"><defs><linearGradient id="bg22" x1="0" y1="0" x2="0" y2="1"><stop offset="0" stop-color="#5a5a5a"/><stop offset="1" stop-color="#484848"/></linearGradient></defs><circle cx="11" cy="11" r="10.2" fill="url(#bg22)" stroke="#262626" stroke-width="1.2"/><path d="M11 5.5 L16.5 11 L11 16.5 L5.5 11 Z" fill="#d0d0d0"/></svg>
<svg style="left:77.3px;top:363px;" width="22" height="22" viewBox="0 0 22 22"><defs><linearGradient id="bg23" x1="0" y1="0" x2="0" y2="1"><stop offset="0" stop-color="#5a5a5a"/><stop offset="1" stop-color="#484848"/></linearGradient></defs><circle cx="11" cy="11" r="10.2" fill="url(#bg23)" stroke="#262626" stroke-width="1.2"/><text x="11.2" y="15.2" font-family="Liberation Sans" font-size="10.5" font-weight="700" fill="#cfcfcf" text-anchor="middle" letter-spacing="-0.4">EQ</text></svg>
<svg style="left:101.3px;top:363px;" width="22" height="22" viewBox="0 0 22 22"><defs><linearGradient id="bg24" x1="0" y1="0" x2="0" y2="1"><stop offset="0" stop-color="#5a5a5a"/><stop offset="1" stop-color="#484848"/></linearGradient></defs><circle cx="11" cy="11" r="10.2" fill="url(#bg24)" stroke="#262626" stroke-width="1.2"/><text x="11" y="15" font-family="Liberation Sans" font-size="9.6" font-weight="700" fill="#cfcfcf" text-anchor="middle" letter-spacing="-0.7">SUB</text></svg>
<svg style="left:125.30000000000001px;top:363px;" width="22" height="22" viewBox="0 0 22 22"><defs><linearGradient id="bg25" x1="0" y1="0" x2="0" y2="1"><stop offset="0" stop-color="#5a5a5a"/><stop offset="1" stop-color="#484848"/></linearGradient></defs><circle cx="11" cy="11" r="10.2" fill="url(#bg25)" stroke="#262626" stroke-width="1.2"/><path d="M6 7.3 H16 M6 11 H16 M6 14.7 H16" stroke="#d0d0d0" stroke-width="1.9"/></svg>
<div class="t" style="left:4px;top:390px;font-size:9.5px;line-height:10px;color:#f4f4f4;font-weight:700;letter-spacing:-0.6px">-96</div>
<svg style="left:22px;top:389.5px;" width="16" height="12" viewBox="0 0 16 12"><defs><linearGradient id="hc" x1="0" y1="0" x2="0" y2="1"><stop offset="0" stop-color="#949494"/><stop offset="1" stop-color="#7a7a7a"/></linearGradient></defs><path d="M1 11.3 V7.8 A7 7 0 0 1 15 7.8 V11.3 Z" fill="url(#hc)" stroke="#2a2a2a" stroke-width="1"/></svg>
<svg style="left:39.2px;top:389.5px;" width="16" height="12" viewBox="0 0 16 12"><defs><linearGradient id="hc" x1="0" y1="0" x2="0" y2="1"><stop offset="0" stop-color="#949494"/><stop offset="1" stop-color="#7a7a7a"/></linearGradient></defs><path d="M1 11.3 V7.8 A7 7 0 0 1 15 7.8 V11.3 Z" fill="url(#hc)" stroke="#2a2a2a" stroke-width="1"/></svg>
<div style="left:67px;top:389.6px;width:30px;height:9.6px;background:#252525;"></div>
<div style="left:67px;top:389.6px;width:6.5px;height:9.6px;background:linear-gradient(#40e000,#007800);"></div>
<div style="left:99px;top:389.6px;width:30px;height:9.6px;background:#252525;"></div>
<div style="left:122.5px;top:389.6px;width:6.5px;height:9.6px;background:linear-gradient(#40e000,#007800);"></div>
<div class="t" style="left:130.5px;top:390px;font-size:9.5px;line-height:10px;color:#f4f4f4;font-weight:700;letter-spacing:-0.6px">e99</div>
<div style="left:159px;top:362px;width:4px;height:28px;background:#262626;"></div>
<svg style="left:152px;top:379.5px;" width="19" height="20" viewBox="0 0 19 20"><defs><linearGradient id="kn" x1="0" y1="0" x2="0" y2="1"><stop offset="0" stop-color="#b4b4b4"/><stop offset="1" stop-color="#7e7e7e"/></linearGradient></defs><circle cx="9" cy="10" r="8" fill="#2c2c2c" fill-opacity="0.7"/><circle cx="9" cy="9" r="7.5" fill="url(#kn)" stroke="#333" stroke-width="0.8"/></svg>
<div class="t" style="left:150.50px;width:40px;text-align:right;top:345.14px;font-size:10px;line-height:10px;color:#f0f0f0;font-weight:700;">-1</div>
<div class="t" style="left:148.80px;width:40px;text-align:right;top:354.07px;font-size:9.6px;line-height:9.6px;color:#f0f0f0;font-weight:700;">dB</div>
<div class="t" style="left:150.50px;width:40px;text-align:right;top:395.54px;font-size:10px;line-height:10px;color:#f0f0f0;font-weight:700;">-40</div>
<div style="left:191px;top:341px;width:407px;height:64px;background:#272929;"></div>
<div style="left:191px;top:341px;width:202px;height:64px;background:#9acd32;"></div>
<div style="left:393px;top:341px;width:1px;height:64px;background:#c82020;"></div>
<div style="left:493px;top:341px;width:105px;height:64px;background:linear-gradient(90deg,#666 0%,#5a5a5a 100%);"></div>
<div style="left:493px;top:341px;width:1px;height:64px;background:#e6e6e6;"></div>
<div style="left:394px;top:360px;width:204px;height:1px;background:#f01010;"></div>
<div style="left:394px;top:369px;width:204px;height:1px;background:#50f000;"></div>
<div style="left:395px;top:341px;width:1px;height:64px;background:#c82020;"></div>
<div style="left:609px;top:93px;width:328px;height:321px;background:#404141;"></div>
<div style="left:609px;top:93px;width:328px;height:20px;background:#535454;"></div>
<div class="t" style="left:613.4px;top:97.64px;font-size:12px;line-height:12px;color:#eaeaea;font-weight:400;">Clipboard</div>
<svg style="left:906.2px;top:99px;" width="10" height="10" viewBox="0 0 10 10"><g fill="#f4f4f4"><rect x="1.7" y="0" width="1.9" height="5.4"/><rect x="5.9" y="0" width="1.2" height="5.4"/><rect x="1.7" y="0" width="5.4" height="1.2"/><rect x="0.9" y="5" width="7.2" height="1.2"/><rect x="4" y="6" width="1.1" height="2.2"/></g></svg>
<svg style="left:922.4px;top:98.6px;" width="10" height="9" viewBox="0 0 10 9"><path d="M0.6 0.6 L8.9 7.6 M8.9 0.6 L0.6 7.6" stroke="#f4f4f4" stroke-width="1.5"/></svg>
<div style="left:609px;top:113px;width:328px;height:24px;background:#2e2e2e;"></div>
<div style="left:609px;top:113px;width:53px;height:24px;background:#404141;"></div>
<div style="left:662px;top:113px;width:55px;height:24px;background:#353535;"></div>
<div style="left:717px;top:113px;width:1px;height:24px;background:#3c3c3c;"></div>
<div style="left:661px;top:137px;width:276px;height:1px;background:#525252;"></div>
<div class="t" style="left:619.3px;top:120.21px;font-size:11.8px;line-height:11.8px;color:#eaeaea;font-weight:400;">Audio</div>
<div class="t" style="left:672.3px;top:119.80px;font-size:11.1px;line-height:11.1px;color:#eaeaea;font-weight:400;">Effects</div>
<div class="t" style="left:615.6px;top:146.90px;font-size:11.7px;line-height:11.7px;color:#eaeaea;font-weight:400;">Sort order</div>
<div style="left:615px;top:160px;width:316px;height:21px;background:#2c2c2c;border-bottom:1px solid #555;box-sizing:border-box"></div>
<div class="t" style="left:618.2px;top:164.90px;font-size:11.7px;line-height:11.7px;color:#f4f4f4;font-weight:400;">No automatic sort</div>
<svg style="left:919px;top:168px;" width="8" height="6" viewBox="0 0 8 6"><path d="M0 0 H7.5 L3.75 4.3 Z" fill="#f4f4f4"/></svg>
<div class="t" style="left:615.6px;top:188.84px;font-size:12px;line-height:12px;color:#eaeaea;font-weight:400;">Filter</div>
<div style="left:615px;top:202px;width:316px;height:21px;background:#2c2c2c;border-bottom:1px solid #555;box-sizing:border-box"></div>
<div class="t" style="left:618.2px;top:206.84px;font-size:12px;line-height:12px;color:#f4f4f4;font-weight:400;">No filter</div>
<svg style="left:919px;top:210px;" width="8" height="6" viewBox="0 0 8 6"><path d="M0 0 H7.5 L3.75 4.3 Z" fill="#f4f4f4"/></svg>
<div style="left:615px;top:231px;width:316px;height:50px;background:#33506b;"></div>
<div style="left:615px;top:231px;width:30px;height:50px;background:#1c74c6;"></div>
<svg style="left:625px;top:248px;" width="14" height="16" viewBox="0 0 14 16"><path d="M0 0 L13.5 8 L0 16 Z" fill="#2a2a2a"/></svg>
<div style="left:871px;top:231px;width:30px;height:50px;background:#2c5a84;"></div>
<div style="left:901px;top:231px;width:30px;height:50px;background:#1e6eb5;"></div>
<svg style="left:877px;top:245px;" width="18" height="23" viewBox="0 0 18 23"><path d="M2.5 7 C2.5 3.5 5.5 1.2 9.3 1.2 C13.5 1.2 16.2 3.8 16.2 7 C16.2 10.5 13 11.5 12 14.5 C11 17 11.5 21.8 6.8 21.8 C5.5 21.8 4.8 21 4.6 20.2" fill="none" stroke="#ffa010" stroke-width="2.5" stroke-linecap="round"/></svg>
<svg style="left:908px;top:250px;" width="15" height="14" viewBox="0 0 15 14"><path d="M1.6 1 L13.6 13.3 M13.6 1 L1.6 13.3" stroke="#2c2c2c" stroke-width="2.8"/></svg>
<div class="t" style="left:651px;top:237.16px;font-size:10.8px;line-height:10.8px;color:#f0f0f0;font-weight:400;">T</div>
<div style="left:663px;top:231px;width:1px;height:20px;background:#e8e8e8;"></div>
<div class="t" style="left:670.6px;top:237.16px;font-size:10.8px;line-height:10.8px;color:#f0f0f0;font-weight:400;">1</div>
<div style="left:683px;top:231px;width:1px;height:22px;background:#e8e8e8;"></div>
<div class="t" style="left:692.3px;top:237.19px;font-size:11px;line-height:11px;font-weight:700;color:#f4f4f4;width:178.70000000000005px;overflow:hidden">C:\Users\nin\Desktop\Maus-48.mp3.wav</div>
<div class="t" style="left:669.3px;top:254.29px;font-size:11px;line-height:11px;color:#f0f0f0;font-weight:400;">00:00:28.53</div>
<div class="t" style="left:669.3px;top:265.29px;font-size:10.85px;line-height:11px;color:#f0f0f0;width:182.70000000000005px;overflow:hidden">BWF, Linear; 48.0 kHz, 16 bit (l), Stereo</div>
<svg style="left:857px;top:267.5px;" width="13" height="12" viewBox="0 0 13 12"><path d="M0.5 6 L6 0.8 L11.5 6 M0.5 10 L6 4.8 L11.5 10" fill="none" stroke="#2a2a2a" stroke-width="1.5"/></svg>
<div style="left:615px;top:283px;width:316px;height:50px;background:#32504c;"></div>
<div style="left:615px;top:283px;width:30px;height:50px;background:#2a8a7c;"></div>
<svg style="left:625px;top:300px;" width="14" height="16" viewBox="0 0 14 16"><path d="M0 0 L13.5 8 L0 16 Z" fill="#2a2a2a"/></svg>
<div style="left:871px;top:283px;width:30px;height:50px;background:#325e58;"></div>
<div style="left:901px;top:283px;width:30px;height:50px;background:#2a8a7c;"></div>
<svg style="left:877px;top:297px;" width="18" height="23" viewBox="0 0 18 23"><path d="M2.5 7 C2.5 3.5 5.5 1.2 9.3 1.2 C13.5 1.2 16.2 3.8 16.2 7 C16.2 10.5 13 11.5 12 14.5 C11 17 11.5 21.8 6.8 21.8 C5.5 21.8 4.8 21 4.6 20.2" fill="none" stroke="#c8101e" stroke-width="2.5" stroke-linecap="round"/></svg>
<svg style="left:908px;top:302px;" width="15" height="14" viewBox="0 0 15 14"><path d="M1.6 1 L13.6 13.3 M13.6 1 L1.6 13.3" stroke="#2c2c2c" stroke-width="2.8"/></svg>
<div class="t" style="left:651px;top:289.16px;font-size:10.8px;line-height:10.8px;color:#f0f0f0;font-weight:400;">T</div>
<div style="left:663px;top:283px;width:1px;height:20px;background:#e8e8e8;"></div>
<div class="t" style="left:672.2px;top:289.19px;font-size:11px;line-height:11px;font-weight:700;color:#f4f4f4;width:198.79999999999995px;overflow:hidden">C:\Users\nin\Desktop\Ping-Trenner.MP3</div>
<div class="t" style="left:672.2px;top:306.29px;font-size:11px;line-height:11px;color:#f0f0f0;font-weight:400;">00:00:01.12</div>
<div class="t" style="left:672.2px;top:317.29px;font-size:10.85px;line-height:11px;color:#f0f0f0;width:179.79999999999995px;overflow:hidden">Raw, MPEG-L.3; 48.0 kHz, 128 kbit/s</div>
<svg style="left:857px;top:319.5px;" width="13" height="12" viewBox="0 0 13 12"><path d="M0.5 6 L6 0.8 L11.5 6 M0.5 10 L6 4.8 L11.5 10" fill="none" stroke="#2a2a2a" stroke-width="1.5"/></svg>
<div style="left:1px;top:418px;width:136px;height:171px;background:#404141;"></div>
<div style="left:1px;top:418px;width:136px;height:20px;background:#535454;"></div>
<div class="t" style="left:5.5px;top:422.93px;font-size:11.3px;line-height:11.3px;color:#eaeaea;font-weight:400;">Fader / VU meter</div>
<svg style="left:106px;top:424px;" width="10" height="10" viewBox="0 0 10 10"><g fill="#f4f4f4"><rect x="1.7" y="0" width="1.9" height="5.4"/><rect x="5.9" y="0" width="1.2" height="5.4"/><rect x="1.7" y="0" width="5.4" height="1.2"/><rect x="0.9" y="5" width="7.2" height="1.2"/><rect x="4" y="6" width="1.1" height="2.2"/></g></svg>
<svg style="left:122.5px;top:423.8px;" width="10" height="9" viewBox="0 0 10 9"><path d="M0.6 0.6 L8.9 7.6 M8.9 0.6 L0.6 7.6" stroke="#f4f4f4" stroke-width="1.5"/></svg>
<div style="left:54px;top:454px;width:5px;height:107px;background:#5e5e5e;"></div>
<div style="left:54px;top:454px;width:5px;height:10px;background:#262626;"></div>
<svg style="left:47.0px;top:459.2px;" width="19" height="20" viewBox="0 0 19 20"><defs><linearGradient id="kb" x1="0" y1="0" x2="0" y2="1"><stop offset="0" stop-color="#b8b8b8"/><stop offset="1" stop-color="#808080"/></linearGradient></defs><circle cx="9.5" cy="10.5" r="8.2" fill="#2a2a2a" fill-opacity="0.7"/><circle cx="9.5" cy="9.5" r="7.8" fill="url(#kb)" stroke="#333" stroke-width="0.8"/></svg>
<div style="left:71px;top:454px;width:5px;height:107px;background:#5e5e5e;"></div>
<div style="left:71px;top:454px;width:5px;height:10px;background:#262626;"></div>
<svg style="left:64.0px;top:459.2px;" width="19" height="20" viewBox="0 0 19 20"><defs><linearGradient id="kb" x1="0" y1="0" x2="0" y2="1"><stop offset="0" stop-color="#b8b8b8"/><stop offset="1" stop-color="#808080"/></linearGradient></defs><circle cx="9.5" cy="10.5" r="8.2" fill="#2a2a2a" fill-opacity="0.7"/><circle cx="9.5" cy="9.5" r="7.8" fill="url(#kb)" stroke="#333" stroke-width="0.8"/></svg>
<div class="t" style="left:15.20px;width:30px;text-align:right;top:456.34px;font-size:10px;line-height:10px;color:#f0f0f0;font-weight:700;">+6</div>
<div class="t" style="left:15.20px;width:30px;text-align:right;top:503.94px;font-size:10px;line-height:10px;color:#f0f0f0;font-weight:700;">-46</div>
<div class="t" style="left:15.20px;width:30px;text-align:right;top:552.63px;font-size:10px;line-height:10px;color:#f0f0f0;font-weight:700;">-99</div>
<div class="t" style="left:70.00px;width:30px;text-align:right;top:454.94px;font-size:10px;line-height:10px;color:#f0f0f0;font-weight:700;">0</div>
<div class="t" style="left:70.00px;width:30px;text-align:right;top:466.89px;font-size:10px;line-height:10px;color:#f0f0f0;font-weight:700;">-3</div>
<div class="t" style="left:70.00px;width:30px;text-align:right;top:478.84px;font-size:10px;line-height:10px;color:#f0f0f0;font-weight:700;">-7</div>
<div class="t" style="left:70.00px;width:30px;text-align:right;top:490.79px;font-size:10px;line-height:10px;color:#f0f0f0;font-weight:700;">-12</div>
<div class="t" style="left:70.00px;width:30px;text-align:right;top:502.74px;font-size:10px;line-height:10px;color:#f0f0f0;font-weight:700;">-15</div>
<div class="t" style="left:70.00px;width:30px;text-align:right;top:514.68px;font-size:10px;line-height:10px;color:#f0f0f0;font-weight:700;">-20</div>
<div class="t" style="left:70.00px;width:30px;text-align:right;top:526.63px;font-size:10px;line-height:10px;color:#f0f0f0;font-weight:700;">-30</div>
<div class="t" style="left:70.00px;width:30px;text-align:right;top:538.59px;font-size:10px;line-height:10px;color:#f0f0f0;font-weight:700;">-40</div>
<div class="t" style="left:70.00px;width:30px;text-align:right;top:550.53px;font-size:10px;line-height:10px;color:#f0f0f0;font-weight:700;">-50</div>
<div style="left:103px;top:454px;width:1.5px;height:107px;background:linear-gradient(#ff1010 0px,#ff1010 3px,#ff8000 3px,#ff8000 6px,#ffff00 6px,#ffff00 12px,#80ff00 22px,#00d000 40px,#00c000 100%);"></div>
<div style="left:105px;top:454px;width:3px;height:107px;background:#222;"></div>
<div style="left:110px;top:454px;width:3px;height:107px;background:#222;"></div>
<div style="left:113.5px;top:454px;width:1.5px;height:107px;background:linear-gradient(#ff1010 0px,#ff1010 3px,#ff8000 3px,#ff8000 6px,#ffff00 6px,#ffff00 12px,#80ff00 22px,#00d000 40px,#00c000 100%);"></div>
<div style="left:30px;top:565px;width:85px;height:1.2px;background:#f0f0f0;"></div>
<div class="t" style="left:51.3px;top:570.94px;font-size:12px;line-height:12px;color:#eaeaea;font-weight:400;">Out [dB]</div>
<div style="left:141px;top:418px;width:796px;height:171px;background:#404141;"></div>
<div style="left:141px;top:418px;width:796px;height:20px;background:#535454;"></div>
<div class="t" style="left:145.6px;top:423.03px;font-size:11.3px;line-height:11.3px;color:#eaeaea;font-weight:400;">Transport</div>
<svg style="left:156.85px;top:453.05px;" width="60.5" height="60.5" viewBox="0 0 60.5 60.5"><defs><linearGradient id="bgr" x1="0" y1="0" x2="0" y2="1"><stop offset="0" stop-color="#575757"/><stop offset="1" stop-color="#444444"/></linearGradient></defs><circle cx="30.25" cy="30.25" r="29.25" fill="url(#bgr)" stroke="#262626" stroke-width="1.3"/><circle cx="30.25" cy="30.25" r="28.05" fill="none" stroke="#5c5c5c" stroke-width="0.8" stroke-opacity="0.6"/><path d="M24.5 20 L44 30.25 L24.5 40.5 Z" fill="#7ac02c"/></svg>
<svg style="left:221.95px;top:453.05px;" width="60.5" height="60.5" viewBox="0 0 60.5 60.5"><defs><linearGradient id="bgr" x1="0" y1="0" x2="0" y2="1"><stop offset="0" stop-color="#575757"/><stop offset="1" stop-color="#444444"/></linearGradient></defs><circle cx="30.25" cy="30.25" r="29.25" fill="url(#bgr)" stroke="#262626" stroke-width="1.3"/><circle cx="30.25" cy="30.25" r="28.05" fill="none" stroke="#5c5c5c" stroke-width="0.8" stroke-opacity="0.6"/><rect x="20.7" y="21" width="18.5" height="18" fill="#d2d2d2"/></svg>
<svg style="left:286.85px;top:452.85px;" width="60.5" height="60.5" viewBox="0 0 60.5 60.5"><defs><linearGradient id="bgr" x1="0" y1="0" x2="0" y2="1"><stop offset="0" stop-color="#575757"/><stop offset="1" stop-color="#444444"/></linearGradient></defs><circle cx="30.25" cy="30.25" r="29.25" fill="url(#bgr)" stroke="#262626" stroke-width="1.3"/><circle cx="30.25" cy="30.25" r="28.05" fill="none" stroke="#5c5c5c" stroke-width="0.8" stroke-opacity="0.6"/><path d="M11 30.5 L26 22.5 V38.5 Z M26 30.5 L41 22.5 V38.5 Z" fill="#7ac02c"/></svg>
<svg style="left:352.15px;top:452.85px;" width="60.5" height="60.5" viewBox="0 0 60.5 60.5"><defs><linearGradient id="bgr" x1="0" y1="0" x2="0" y2="1"><stop offset="0" stop-color="#575757"/><stop offset="1" stop-color="#444444"/></linearGradient></defs><circle cx="30.25" cy="30.25" r="29.25" fill="url(#bgr)" stroke="#262626" stroke-width="1.3"/><circle cx="30.25" cy="30.25" r="28.05" fill="none" stroke="#5c5c5c" stroke-width="0.8" stroke-opacity="0.6"/><path d="M18 22.5 L33 30.5 L18 38.5 Z M33 22.5 L48 30.5 L33 38.5 Z" fill="#7ac02c"/></svg>
<svg style="left:157.5px;top:518.6px;" width="27" height="27" viewBox="0 0 27 27"><defs><linearGradient id="bgr" x1="0" y1="0" x2="0" y2="1"><stop offset="0" stop-color="#575757"/><stop offset="1" stop-color="#444444"/></linearGradient></defs><circle cx="13.5" cy="13.5" r="12.5" fill="url(#bgr)" stroke="#262626" stroke-width="1.3"/><circle cx="13.5" cy="13.5" r="11.3" fill="none" stroke="#5c5c5c" stroke-width="0.8" stroke-opacity="0.6"/><path d="M11.3 8.3 L7.3 13.5 L11.3 18.7 M15.3 8.3 L11.3 13.5 L15.3 18.7" fill="none" stroke="#7a7a7a" stroke-width="1.3"/></svg>
<svg style="left:189.5px;top:518.6px;" width="27" height="27" viewBox="0 0 27 27"><defs><linearGradient id="bgr" x1="0" y1="0" x2="0" y2="1"><stop offset="0" stop-color="#575757"/><stop offset="1" stop-color="#444444"/></linearGradient></defs><circle cx="13.5" cy="13.5" r="12.5" fill="url(#bgr)" stroke="#262626" stroke-width="1.3"/><circle cx="13.5" cy="13.5" r="11.3" fill="none" stroke="#5c5c5c" stroke-width="0.8" stroke-opacity="0.6"/><path d="M10 8 L14 13.5 L10 19 M14 8 L18 13.5 L14 19" fill="none" stroke="#7a7a7a" stroke-width="1.3"/></svg>
<svg style="left:159px;top:551px;" width="57" height="26" viewBox="0 0 57 26"><defs><linearGradient id="bgr" x1="0" y1="0" x2="0" y2="1"><stop offset="0" stop-color="#575757"/><stop offset="1" stop-color="#444444"/></linearGradient></defs><rect x="0.7" y="0.7" width="55.6" height="24.6" rx="12.3" fill="url(#bgr)" stroke="#262626" stroke-width="1.3"/></svg>
<div class="t" style="left:157.50px;width:60px;text-align:center;top:559.40px;font-size:12.4px;line-height:12.4px;color:#d2d2d2;font-weight:400;letter-spacing:-0.4px">SCRUB</div>
<svg style="left:428.75px;top:452.75px;" width="44.5" height="44.5" viewBox="0 0 44.5 44.5"><defs><linearGradient id="bgr" x1="0" y1="0" x2="0" y2="1"><stop offset="0" stop-color="#575757"/><stop offset="1" stop-color="#444444"/></linearGradient></defs><circle cx="22.25" cy="22.25" r="21.25" fill="url(#bgr)" stroke="#262626" stroke-width="1.3"/><circle cx="22.25" cy="22.25" r="20.05" fill="none" stroke="#5c5c5c" stroke-width="0.8" stroke-opacity="0.6"/><path d="M13 15.3 L23.6 22.25 L13 29.2 Z" fill="#d2d2d2"/><rect x="26.8" y="15.3" width="4.9" height="13.9" fill="#d2d2d2"/></svg>
<svg style="left:476.95px;top:452.75px;" width="44.5" height="44.5" viewBox="0 0 44.5 44.5"><defs><linearGradient id="bgr" x1="0" y1="0" x2="0" y2="1"><stop offset="0" stop-color="#575757"/><stop offset="1" stop-color="#444444"/></linearGradient></defs><circle cx="22.25" cy="22.25" r="21.25" fill="url(#bgr)" stroke="#262626" stroke-width="1.3"/><circle cx="22.25" cy="22.25" r="20.05" fill="none" stroke="#5c5c5c" stroke-width="0.8" stroke-opacity="0.6"/><rect x="13.2" y="15.3" width="4.9" height="13.9" fill="#d2d2d2"/><path d="M23.9 15.3 L34 22.25 L23.9 29.2 Z" fill="#d2d2d2"/></svg>
<svg style="left:525.05px;top:452.75px;" width="44.5" height="44.5" viewBox="0 0 44.5 44.5"><defs><linearGradient id="bgr" x1="0" y1="0" x2="0" y2="1"><stop offset="0" stop-color="#575757"/><stop offset="1" stop-color="#444444"/></linearGradient></defs><circle cx="22.25" cy="22.25" r="21.25" fill="url(#bgr)" stroke="#262626" stroke-width="1.3"/><circle cx="22.25" cy="22.25" r="20.05" fill="none" stroke="#5c5c5c" stroke-width="0.8" stroke-opacity="0.6"/><rect x="11.9" y="15.3" width="1.9" height="13.9" fill="#d2d2d2"/><path d="M18 15.3 L28.1 22.25 L18 29.2 Z" fill="#d2d2d2"/><rect x="30.6" y="15.3" width="2.5" height="13.9" fill="#d2d2d2"/></svg>
<svg style="left:573.05px;top:452.75px;" width="44.5" height="44.5" viewBox="0 0 44.5 44.5"><defs><linearGradient id="bgr" x1="0" y1="0" x2="0" y2="1"><stop offset="0" stop-color="#575757"/><stop offset="1" stop-color="#444444"/></linearGradient></defs><circle cx="22.25" cy="22.25" r="21.25" fill="url(#bgr)" stroke="#262626" stroke-width="1.3"/><circle cx="22.25" cy="22.25" r="20.05" fill="none" stroke="#5c5c5c" stroke-width="0.8" stroke-opacity="0.6"/><path d="M5.7 15.3 L16.2 22.25 L5.7 29.2 Z" fill="#d2d2d2"/><rect x="18.3" y="15.3" width="2.5" height="13.9" fill="#d2d2d2"/><rect x="23" y="15.3" width="2.7" height="13.9" fill="#d2d2d2"/><path d="M28.9 15.3 L39.1 22.25 L28.9 29.2 Z" fill="#d2d2d2"/></svg>
<svg style="left:429.5px;top:502.5px;" width="43" height="25.5" viewBox="0 0 43 25.5"><defs><linearGradient id="bgr" x1="0" y1="0" x2="0" y2="1"><stop offset="0" stop-color="#575757"/><stop offset="1" stop-color="#444444"/></linearGradient></defs><rect x="0.7" y="0.7" width="41.6" height="24.1" rx="12.05" fill="url(#bgr)" stroke="#262626" stroke-width="1.3"/><path d="M19.5 8.5 H14.5 A4 4 0 0 0 14.5 16.5 H30.3 A4 4 0 0 0 30.3 8.5 H25.8" fill="none" stroke="#d2d2d2" stroke-width="2"/><path d="M18.8 4.8 L23.8 8.5 L18.8 12.2 Z" fill="#d2d2d2"/></svg>
<svg style="left:477.7px;top:502.5px;" width="43" height="25.5" viewBox="0 0 43 25.5"><defs><linearGradient id="bgr" x1="0" y1="0" x2="0" y2="1"><stop offset="0" stop-color="#575757"/><stop offset="1" stop-color="#444444"/></linearGradient></defs><rect x="0.7" y="0.7" width="41.6" height="24.1" rx="12.05" fill="url(#bgr)" stroke="#262626" stroke-width="1.3"/><path d="M19.5 8.5 H14.5 A4 4 0 0 0 14.5 16.5 H30.3 A4 4 0 0 0 30.3 8.5 H25.8" fill="none" stroke="#d2d2d2" stroke-width="2"/><path d="M18.8 4.8 L23.8 8.5 L18.8 12.2 Z" fill="#d2d2d2"/></svg>
<svg style="left:525.8px;top:502.5px;" width="43" height="25.5" viewBox="0 0 43 25.5"><defs><linearGradient id="bgr" x1="0" y1="0" x2="0" y2="1"><stop offset="0" stop-color="#575757"/><stop offset="1" stop-color="#444444"/></linearGradient></defs><rect x="0.7" y="0.7" width="41.6" height="24.1" rx="12.05" fill="url(#bgr)" stroke="#262626" stroke-width="1.3"/><path d="M19.5 8.5 H14.5 A4 4 0 0 0 14.5 16.5 H30.3 A4 4 0 0 0 30.3 8.5 H25.8" fill="none" stroke="#d2d2d2" stroke-width="2"/><path d="M18.8 4.8 L23.8 8.5 L18.8 12.2 Z" fill="#d2d2d2"/></svg>
<svg style="left:573.8px;top:502.5px;" width="43" height="25.5" viewBox="0 0 43 25.5"><defs><linearGradient id="bgr" x1="0" y1="0" x2="0" y2="1"><stop offset="0" stop-color="#575757"/><stop offset="1" stop-color="#444444"/></linearGradient></defs><rect x="0.7" y="0.7" width="41.6" height="24.1" rx="12.05" fill="url(#bgr)" stroke="#262626" stroke-width="1.3"/><path d="M19.5 8.5 H14.5 A4 4 0 0 0 14.5 16.5 H30.3 A4 4 0 0 0 30.3 8.5 H25.8" fill="none" stroke="#d2d2d2" stroke-width="2"/><path d="M18.8 4.8 L23.8 8.5 L18.8 12.2 Z" fill="#d2d2d2"/></svg>
<svg style="left:429.5px;top:551.5px;" width="43" height="25.5" viewBox="0 0 43 25.5"><defs><linearGradient id="bgr" x1="0" y1="0" x2="0" y2="1"><stop offset="0" stop-color="#575757"/><stop offset="1" stop-color="#444444"/></linearGradient></defs><rect x="0.7" y="0.7" width="41.6" height="24.1" rx="12.05" fill="url(#bgr)" stroke="#262626" stroke-width="1.3"/><path d="M22.5 7.5 L28 12.75 L22.5 18 L17 12.75 Z" fill="#d2d2d2"/><path d="M28.5 7.5 H35.5 M32 4 V11" stroke="#d2d2d2" stroke-width="1.8"/></svg>
<svg style="left:477.7px;top:551.5px;" width="43" height="25.5" viewBox="0 0 43 25.5"><defs><linearGradient id="bgr" x1="0" y1="0" x2="0" y2="1"><stop offset="0" stop-color="#575757"/><stop offset="1" stop-color="#444444"/></linearGradient></defs><rect x="0.7" y="0.7" width="41.6" height="24.1" rx="12.05" fill="url(#bgr)" stroke="#262626" stroke-width="1.3"/><path d="M22.5 7.5 L28 12.75 L22.5 18 L17 12.75 Z" fill="#d2d2d2"/><path d="M28.5 7 H35.5" stroke="#d2d2d2" stroke-width="1.8"/></svg>
<svg style="left:525.8px;top:551.5px;" width="43" height="25.5" viewBox="0 0 43 25.5"><defs><linearGradient id="bgr" x1="0" y1="0" x2="0" y2="1"><stop offset="0" stop-color="#575757"/><stop offset="1" stop-color="#444444"/></linearGradient></defs><rect x="0.7" y="0.7" width="41.6" height="24.1" rx="12.05" fill="url(#bgr)" stroke="#262626" stroke-width="1.3"/><path d="M19 6.5 L25.5 12.75 L19 19 Z" fill="#d2d2d2"/></svg>
<svg style="left:573.8px;top:551.5px;" width="43" height="25.5" viewBox="0 0 43 25.5"><defs><linearGradient id="bgr" x1="0" y1="0" x2="0" y2="1"><stop offset="0" stop-color="#575757"/><stop offset="1" stop-color="#444444"/></linearGradient></defs><rect x="0.7" y="0.7" width="41.6" height="24.1" rx="12.05" fill="url(#bgr)" stroke="#262626" stroke-width="1.3"/><path d="M25 6.5 L18.5 12.75 L25 19 Z" fill="#d2d2d2"/></svg>
<div class="t" style="left:687.5px;top:455.01px;font-size:11.8px;line-height:11.8px;color:#eaeaea;font-weight:400;">Mode</div>
<svg style="left:694px;top:488px;" width="32" height="20" viewBox="0 0 32 20"><circle cx="5.4" cy="4.7" r="3.2" fill="none" stroke="#5ca4c2" stroke-width="1.6"/><circle cx="5.4" cy="14.6" r="3.2" fill="none" stroke="#5ca4c2" stroke-width="1.6"/><path d="M8 12.2 Q19 4.5 30.3 2.2 Q22 7 9 14.3 Z" fill="#5ca4c2"/><path d="M7.8 5.6 L30.6 17.8 Q19 16.2 8 8.8 Z" fill="#5ca4c2" stroke="#404141" stroke-width="0.9"/><path d="M7.8 5.6 L30.6 17.8 Q19 16.2 8 8.8 Z" fill="#5ca4c2"/></svg>
<svg style="left:691px;top:525px;" width="36" height="26" viewBox="0 0 36 26"><path d="M2.5 16 V24 H33 V8 L25.5 13 L16 7 Z" fill="#d0d0d0"/><path d="M2.5 12 L16 3 L25.5 9 L33 4.5" fill="none" stroke="#d0d0d0" stroke-width="1.4"/><circle cx="2.5" cy="12" r="1.7" fill="#d0d0d0"/><circle cx="16" cy="3" r="1.7" fill="#d0d0d0"/><circle cx="25.5" cy="9" r="1.7" fill="#d0d0d0"/><circle cx="33" cy="4.5" r="1.7" fill="#d0d0d0"/></svg>
<div class="t" style="left:802.3px;top:454.38px;font-size:11.6px;line-height:11.6px;color:#eaeaea;font-weight:400;">Edit type</div>
<svg style="left:803px;top:479.6px;" width="13" height="13" viewBox="0 0 13 13"><circle cx="6.5" cy="6.5" r="5.6" fill="none" stroke="#d8d8d8" stroke-width="1.1"/></svg>
<div class="t" style="left:819.8px;top:481.09px;font-size:11.35px;line-height:11.35px;color:#eaeaea;font-weight:400;">Frame exact editing</div>
<svg style="left:803px;top:499.5px;" width="13" height="13" viewBox="0 0 13 13"><circle cx="6.5" cy="6.5" r="5.6" fill="none" stroke="#d8d8d8" stroke-width="1.1"/></svg>
<div class="t" style="left:819.8px;top:500.99px;font-size:11.35px;line-height:11.35px;color:#eaeaea;font-weight:400;">Sample exact editing at zero crossings</div>
<svg style="left:803px;top:519.4px;" width="13" height="13" viewBox="0 0 13 13"><circle cx="6.5" cy="6.5" r="5.6" fill="none" stroke="#d8d8d8" stroke-width="1.1"/></svg>
<div class="t" style="left:819.8px;top:520.89px;font-size:11.35px;line-height:11.35px;color:#eaeaea;font-weight:400;">Sample exact editing using crossfade</div>
<svg style="left:803px;top:539.3000000000001px;" width="13" height="13" viewBox="0 0 13 13"><circle cx="6.5" cy="6.5" r="5.6" fill="none" stroke="#d8d8d8" stroke-width="1.1"/><circle cx="6.5" cy="6.5" r="3" fill="#f0f0f0"/></svg>
<div class="t" style="left:819.8px;top:540.79px;font-size:11.35px;line-height:11.35px;color:#eaeaea;font-weight:400;">Sample exact editing using envelope</div>
<div style="left:137px;top:418px;width:4px;height:171px;background:#1d1d1d;"></div>
<div style="left:937px;top:93px;width:1px;height:544px;background:#4290b0;"></div>
<div style="left:1px;top:589px;width:936px;height:3px;background:#5b8427;"></div>
<div style="left:1px;top:592px;width:936px;height:25px;background:#2f2f2f;"></div>
<div style="left:1px;top:592px;width:68px;height:25px;background:#587f26;"></div>
<div style="left:158px;top:593px;width:1px;height:23.5px;background:#454545;"></div>
<div style="left:249px;top:593px;width:1px;height:23.5px;background:#454545;"></div>
<div style="left:328px;top:593px;width:1px;height:23.5px;background:#454545;"></div>
<div class="t" style="left:11px;top:600.29px;font-size:11px;line-height:11px;color:#eef2e8;font-weight:400;letter-spacing:-0.4px">EasyTrack</div>
<div class="t" style="left:80.2px;top:599.87px;font-size:11.5px;line-height:11.5px;color:#eaeaea;font-weight:400;">Reporter Box</div>
<div class="t" style="left:169.2px;top:599.95px;font-size:11.4px;line-height:11.4px;color:#eaeaea;font-weight:400;">Record Mode</div>
<div class="t" style="left:260.5px;top:600.29px;font-size:11px;line-height:11px;color:#eaeaea;font-weight:400;">SingleTrack</div>
<div style="left:1px;top:617px;width:936px;height:19px;background:#1c1c1c;"></div>
<div class="t" style="left:6px;top:623.37px;font-size:10.9px;line-height:10.9px;color:#f4f4f4;font-weight:400;">Ready, Free phys. memory: 10746 MBytes</div>
<div style="left:587px;top:619px;width:1px;height:16px;background:#6a6a6a;"></div>
<div style="left:588px;top:619px;width:1px;height:16px;background:#0c0c0c;"></div>
<div style="left:664px;top:619px;width:1px;height:16px;background:#6a6a6a;"></div>
<div style="left:665px;top:619px;width:1px;height:16px;background:#0c0c0c;"></div>
<div style="left:718px;top:619px;width:1px;height:16px;background:#6a6a6a;"></div>
<div style="left:719px;top:619px;width:1px;height:16px;background:#0c0c0c;"></div>
<div style="left:815px;top:619px;width:1px;height:16px;background:#6a6a6a;"></div>
<div style="left:816px;top:619px;width:1px;height:16px;background:#0c0c0c;"></div>
<div style="left:864px;top:619px;width:1px;height:16px;background:#6a6a6a;"></div>
<div style="left:865px;top:619px;width:1px;height:16px;background:#0c0c0c;"></div>
<div style="left:921px;top:619px;width:1px;height:16px;background:#6a6a6a;"></div>
<div style="left:922px;top:619px;width:1px;height:16px;background:#0c0c0c;"></div>
<div class="t" style="left:590.5px;top:622.95px;font-size:11.4px;line-height:11.4px;color:#f4f4f4;font-weight:400;">Pipe: disabled</div>
<div class="t" style="left:668.3px;top:623.29px;font-size:11px;line-height:11px;color:#f4f4f4;font-weight:400;">User: NNI</div>
<div class="t" style="left:722.4px;top:622.87px;font-size:11.5px;line-height:11.5px;color:#f4f4f4;font-weight:400;">Undo level: 1 of 1</div>
<div class="t" style="left:818.4px;top:623.71px;font-size:10.5px;line-height:10.5px;color:#f4f4f4;font-weight:400;">Tracks: 3</div>
<div class="t" style="left:867.4px;top:623.03px;font-size:11.3px;line-height:11.3px;color:#f4f4f4;font-weight:400;">Objects: 1</div>
<svg style="left:926px;top:625px;" width="11" height="11" viewBox="0 0 11 11"><rect x="9" y="1" width="2" height="2" fill="#d8d8d8"/><rect x="10" y="2" width="1" height="1" fill="#bdbdbd"/><rect x="5" y="5" width="2" height="2" fill="#d8d8d8"/><rect x="6" y="6" width="1" height="1" fill="#bdbdbd"/><rect x="9" y="5" width="2" height="2" fill="#d8d8d8"/><rect x="10" y="6" width="1" height="1" fill="#bdbdbd"/><rect x="1" y="9" width="2" height="2" fill="#d8d8d8"/><rect x="2" y="10" width="1" height="1" fill="#bdbdbd"/><rect x="5" y="9" width="2" height="2" fill="#d8d8d8"/><rect x="6" y="10" width="1" height="1" fill="#bdbdbd"/><rect x="9" y="9" width="2" height="2" fill="#d8d8d8"/><rect x="10" y="10" width="1" height="1" fill="#bdbdbd"/></svg>
<div style="left:0px;top:636px;width:938px;height:1px;background:#4290b0;"></div>
</body></html>
